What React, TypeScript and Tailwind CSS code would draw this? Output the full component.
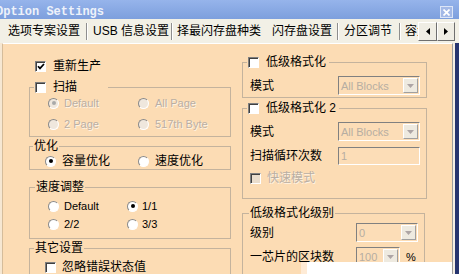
import React from 'react';

function Check({ checked = false, disabled = false }: { checked?: boolean; disabled?: boolean }) {
  return (
    <span
      className={`flex h-[11px] w-[11px] shrink-0 items-center justify-center border border-t-[#7f7f7f] border-l-[#7f7f7f] border-r-white border-b-white shadow-[inset_1px_1px_0_#404040] ${
        disabled ? 'bg-[#EADDCC]' : 'bg-white'
      }`}
    >
      {checked && (
        <svg width="8" height="7" viewBox="0 0 8 7">
          <path d="M1 3.2 L3 5.4 L7 1" stroke="#000" strokeWidth="1.7" fill="none" />
        </svg>
      )}
    </span>
  );
}

function Radio({ checked = false, disabled = false }: { checked?: boolean; disabled?: boolean }) {
  return (
    <span
      className={`flex h-[11px] w-[11px] shrink-0 items-center justify-center rounded-full border border-t-[#8a8a8a] border-l-[#8a8a8a] border-r-white border-b-white ${
        disabled ? 'bg-[#EFE7DD]' : 'bg-white'
      }`}
    >
      {checked && <span className={`h-[4px] w-[4px] rounded-full ${disabled ? 'bg-[#A9A9A9]' : 'bg-black'}`} />}
    </span>
  );
}

function Select({ value, className }: { value: string; className: string }) {
  return (
    <div
      className={`flex h-[19px] shrink-0 items-center border border-t-[#808080] border-l-[#808080] border-b-white border-r-white bg-[#FCDDB7] p-[1px] ${className}`}
    >
      <span className="flex-1 overflow-hidden whitespace-nowrap pl-[1px] text-[11px] text-[#B6ADA2]">{value}</span>
      <span className="flex h-full w-[15px] items-center justify-center border border-t-white border-l-white border-b-[#A0A0A0] border-r-[#A0A0A0] bg-[#EEEAE0]">
        <svg width="7" height="4" viewBox="0 0 7 4">
          <path d="M0 0h7L3.5 4z" fill="#ADA5A5" />
        </svg>
      </span>
    </div>
  );
}

function Sep() {
  return <span className="h-[17px] w-[2px] shrink-0 border-l border-r border-l-[#8E8E8E] border-r-white" />;
}

const group = 'border border-[#C4B39D]';
const disabledText = 'text-[#B9AFA4] [text-shadow:1px_1px_0_#fff3e4]';

export default function App() {
  return (
    <div className="relative flex h-[274px] w-[459px] flex-col overflow-hidden bg-[#F2F0E6] font-['Liberation_Sans','Noto_Sans_CJK_SC',sans-serif] text-[12px] leading-[14px] text-black">
      {/* title bar */}
      <div className="flex h-[19px] shrink-0 items-center justify-between bg-linear-to-b from-[#96B4EB] to-[#7D9FDD] pt-[5px]">
        <span className="-ml-[4px] whitespace-nowrap font-['Liberation_Mono',monospace] text-[12px] font-bold text-[#EEF2FA]">
          Option Settings
        </span>
        <span className="mr-[6px] flex h-[12px] w-[13px] items-center justify-center border border-[#DCE5F7] bg-[#A3B9E7]">
          <svg width="7" height="7" viewBox="0 0 7 7">
            <path d="M0.5 0.5l6 6M6.5 0.5l-6 6" stroke="#fff" strokeWidth="1.7" />
          </svg>
        </span>
      </div>

      {/* tabs */}
      <div className="flex h-[24px] shrink-0 items-center whitespace-nowrap">
        <span className="w-[86px] shrink-0 overflow-hidden pl-[8px]">选项专案设置</span>
        <Sep />
        <span className="w-[83px] shrink-0 overflow-hidden pl-[5px]">USB 信息设置</span>
        <Sep />
        <span className="w-[93px] shrink-0 overflow-hidden pl-[4px]">择最闪存盘种类</span>
        <span className="w-[71px] shrink-0 overflow-hidden pl-[6px]">闪存盘设置</span>
        <Sep />
        <span className="w-[60px] shrink-0 overflow-hidden pl-[5px]">分区调节</span>
        <Sep />
        <span className="w-[17px] shrink-0 overflow-hidden pl-[4px]">容量</span>
        <div className="flex h-[19px] shrink-0">
          <span className="flex w-[19px] items-center justify-center border border-t-white border-l-white border-b-[#6F6F6F] border-r-[#6F6F6F] bg-[#EFEDE4]">
            <svg width="4" height="7" viewBox="0 0 4 7">
              <path d="M4 0v7L0 3.5z" fill="#000" />
            </svg>
          </span>
          <span className="flex w-[18px] items-center justify-center border border-t-white border-l-white border-b-[#6F6F6F] border-r-[#6F6F6F] bg-[#EFEDE4]">
            <svg width="4" height="7" viewBox="0 0 4 7">
              <path d="M0 0v7L4 3.5z" fill="#000" />
            </svg>
          </span>
        </div>
      </div>

      {/* panel */}
      <div className="flex min-h-0 flex-1">
        <div className="w-[2px] bg-[#F6E7D2]" />
        <div className="flex flex-1 gap-[11px] border-l border-t border-r border-l-[#D5BC9A] border-t-white border-r-[#9E9E9E] bg-[#FCDCB4]">
          {/* left column */}
          <div className="flex w-[228px] shrink-0 flex-col pl-[26px] pt-[15px]">
            <div className="flex h-[14px] items-center gap-[7px] pl-[6px]">
              <Check checked />
              <span>重新生产</span>
            </div>

            <fieldset className={`mt-[7px] w-[202px] ${group}`}>
              <legend className="ml-[4px] h-[14px] w-[74px] pl-[1px]">
                <span className="flex h-[14px] items-center gap-[7px]">
                  <Check />
                  <span>扫描</span>
                </span>
              </legend>
              <div className={`flex flex-col gap-[7px] pb-[5px] pl-[18px] pt-[2px] text-[11px] ${disabledText}`}>
                <div className="flex h-[14px]">
                  <span className="flex w-[90px] items-center gap-[5px]">
                    <Radio checked disabled />
                    Default
                  </span>
                  <span className="flex items-center gap-[6px]">
                    <Radio disabled />
                    All Page
                  </span>
                </div>
                <div className="flex h-[14px]">
                  <span className="flex w-[90px] items-center gap-[5px]">
                    <Radio disabled />2 Page
                  </span>
                  <span className="flex items-center gap-[6px]">
                    <Radio disabled />
                    517th Byte
                  </span>
                </div>
              </div>
            </fieldset>

            <fieldset className={`mt-[2px] w-[202px] ${group}`}>
              <legend className="ml-[3px] h-[14px] px-[1px]">优化</legend>
              <div className="flex h-[14px] pb-[1px] pl-[15px] pt-[1px] box-content">
                <span className="flex w-[93px] items-center gap-[6px]">
                  <Radio checked />
                  容量优化
                </span>
                <span className="flex items-center gap-[6px]">
                  <Radio />
                  速度优化
                </span>
              </div>
            </fieldset>

            <fieldset className={`mt-[10px] w-[202px] ${group}`}>
              <legend className="ml-[5px] h-[14px] px-[1px]">速度调整</legend>
              <div className="flex flex-col gap-[4px] pb-[7px] pl-[18px] pt-[5px] text-[11px]">
                <div className="flex h-[14px]">
                  <span className="flex w-[79px] items-center gap-[5px]">
                    <Radio />
                    Default
                  </span>
                  <span className="flex items-center gap-[4px]">
                    <Radio checked />
                    1/1
                  </span>
                </div>
                <div className="flex h-[14px]">
                  <span className="flex w-[79px] items-center gap-[5px]">
                    <Radio />
                    2/2
                  </span>
                  <span className="flex items-center gap-[4px]">
                    <Radio />
                    3/3
                  </span>
                </div>
              </div>
            </fieldset>

            <fieldset className={`mt-[2px] w-[202px] ${group}`}>
              <legend className="ml-[4px] h-[14px] px-[1px]">其它设置</legend>
              <div className="flex flex-col pb-[10px] pl-[15px] pt-[5px]">
                <div className="flex h-[14px] items-center gap-[6px]">
                  <Check />
                  <span>忽略错誤状态值</span>
                </div>
              </div>
            </fieldset>
          </div>

          {/* right column */}
          <div className="flex w-[185px] shrink-0 flex-col pt-[11px]">
            <fieldset className={`w-[185px] ${group}`}>
              <legend className="ml-[4px] h-[14px] w-[82px] pl-[1px]">
                <span className="flex h-[14px] items-center gap-[7px]">
                  <Check />
                  <span>低级格式化</span>
                </span>
              </legend>
              <div className="flex flex-col pb-[2px] pl-[7px] pt-[7px]">
                <div className="flex h-[19px] items-center">
                  <span className="w-[88px]">模式</span>
                  <Select value="All Blocks" className="w-[82px]" />
                </div>
              </div>
            </fieldset>

            <fieldset className={`mt-[3px] w-[185px] ${group}`}>
              <legend className="ml-[4px] h-[14px] w-[92px] pl-[1px]">
                <span className="flex h-[14px] items-center gap-[7px]">
                  <Check />
                  <span>低级格式化 2</span>
                </span>
              </legend>
              <div className="flex flex-col gap-[6px] pb-[13px] pl-[7px] pt-[7px]">
                <div className="flex h-[19px] items-center">
                  <span className="w-[88px]">模式</span>
                  <Select value="All Blocks" className="w-[82px]" />
                </div>
                <div className="flex h-[18px] items-center">
                  <span className="w-[88px]">扫描循环次数</span>
                  <div className="flex h-[18px] w-[82px] items-center border border-t-[#808080] border-l-[#808080] border-b-white border-r-white bg-[#FCDDB7] pl-[2px] text-[11px] text-[#B6ADA2]">
                    1
                  </div>
                </div>
                <div className={`flex h-[14px] items-center gap-[6px] ${disabledText}`}>
                  <Check disabled />
                  <span>快速模式</span>
                </div>
              </div>
            </fieldset>

            <fieldset className={`mt-[7px] w-[183px] ${group}`}>
              <legend className="ml-[6px] h-[14px] px-[1px]">低级格式化级别</legend>
              <div className="flex flex-col gap-[5px] pb-[10px] pl-[7px] pt-[3px]">
                <div className="flex h-[19px] items-center">
                  <span className="w-[106px]">级别</span>
                  <Select value="0" className="w-[62px]" />
                </div>
                <div className="flex h-[19px] items-center">
                  <span className="w-[106px]">一芯片的区块数</span>
                  <Select value="100" className="w-[44px]" />
                  <span className="ml-[6px] text-[11px]">%</span>
                </div>
              </div>
            </fieldset>
          </div>
        </div>
        <div className="w-[2px] bg-[#F4EEE4]" />
        <div className="w-[4px] bg-[#26346F]" />
      </div>

      {/* popup edge over the bottom */}
      <div className="absolute left-[301px] top-[262px] h-[12px] w-[151px] border-l-[6px] border-[#FEEBD6] bg-white" />
    </div>
  );
}
